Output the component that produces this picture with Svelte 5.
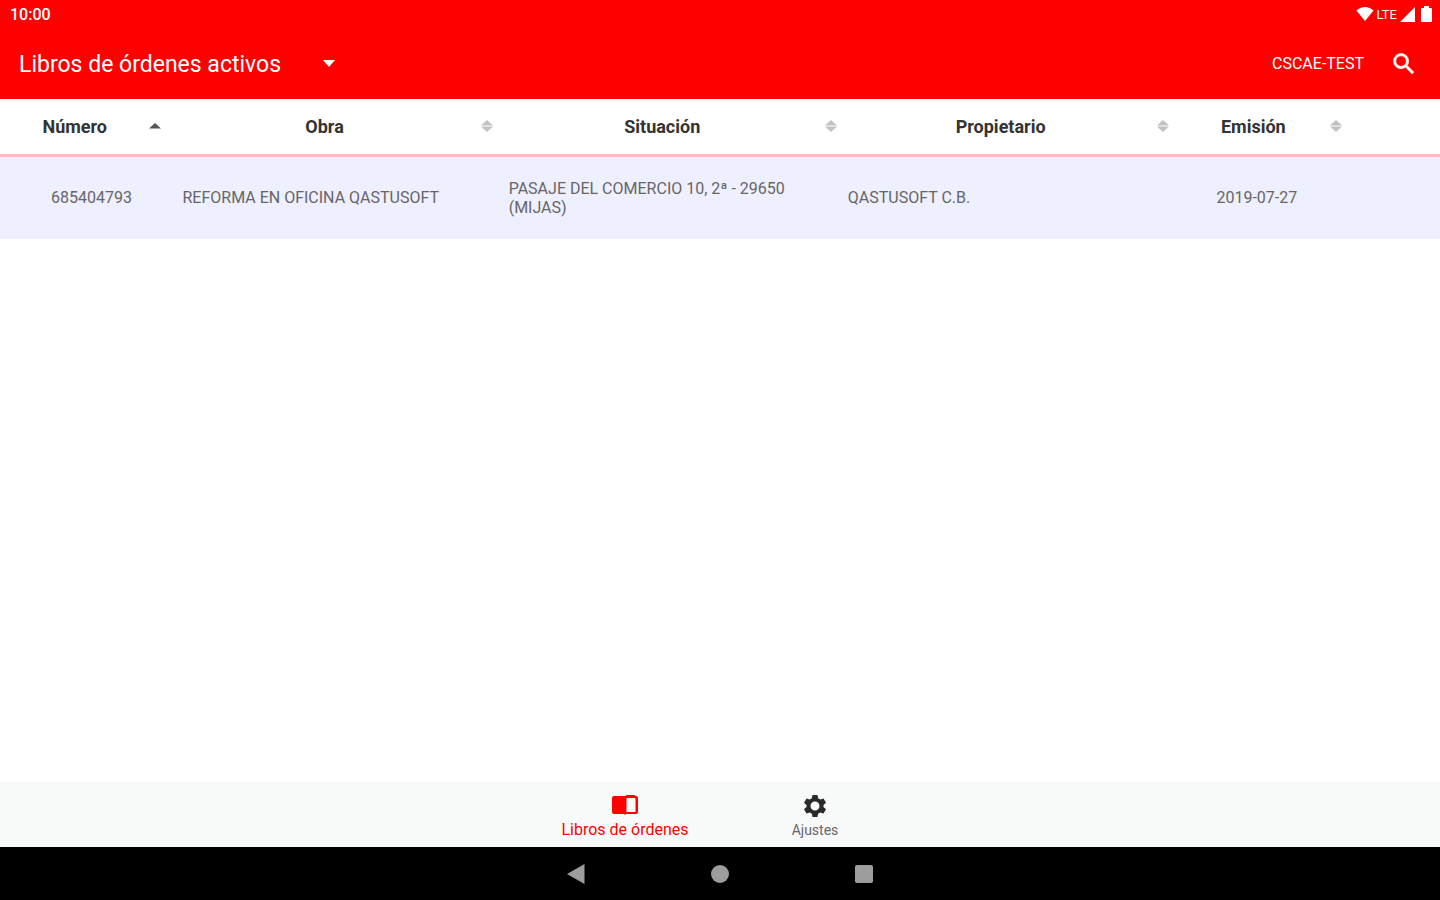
<script>
  const columns = [
    { key: 'numero', label: 'Número' },
    { key: 'obra', label: 'Obra' },
    { key: 'situacion', label: 'Situación' },
    { key: 'propietario', label: 'Propietario' },
    { key: 'emision', label: 'Emisión' }
  ];
  const rows = [
    {
      numero: '685404793',
      obra: 'REFORMA EN OFICINA QASTUSOFT',
      situacion: 'PASAJE DEL COMERCIO 10, 2ª - 29650 (MIJAS)',
      propietario: 'QASTUSOFT C.B.',
      emision: '2019-07-27'
    }
  ];
  let sortKey = $state('numero');
  let tab = $state('libros');
</script>

<div class="screen">
  <div class="status">
    <span>10:00</span>
    <div class="signals">
      <svg width="18" height="16" viewBox="0 0 18 16" aria-hidden="true"><path d="M9 15 .5 4.500C3 2.200 6 1 9 1s6 1.200 8.500 3.500z" /></svg>
      <span class="lte">LTE</span>
      <svg width="15" height="15" viewBox="0 0 15 15" aria-hidden="true"><path d="M15 0v15H0z" /></svg>
      <svg class="battery" width="11" height="16" viewBox="0 0 11 16" aria-hidden="true"><path d="M3 0h5v2h2q1 0 1 1v12q0 1-1 1H1q-1 0-1-1V3q0-1 1-1h2z" /></svg>
    </div>
  </div>

  <header class="appbar">
    <div class="picker">
      <select aria-label="Libros">
        <option>Libros de órdenes activos</option>
      </select>
      <svg width="12" height="7" viewBox="0 0 12 7" aria-hidden="true"><path d="M0 0h12L6 7z" /></svg>
    </div>
    <div class="actions">
      <button class="account">CSCAE-TEST</button>
      <button class="search" aria-label="Buscar">
        <svg width="28" height="28" viewBox="0 0 24 24" aria-hidden="true"><path stroke="currentColor" stroke-width=".5" d="M15.500 14h-.790l-.280-.270A6.471 6.471 0 0 0 16 9.500 6.500 6.500 0 1 0 9.500 16c1.610 0 3.090-.590 4.230-1.570l.270.280v.790l5 4.990L20.490 19l-4.990-5zm-6 0C7.010 14 5 11.990 5 9.500S7.010 5 9.500 5 14 7.010 14 9.500 11.990 14 9.500 14z" /></svg>
      </button>
    </div>
  </header>

  <main>
    <table>
      <thead>
        <tr>
          {#each columns as col}
            <th class={col.key} scope="col">
              <button onclick={() => (sortKey = col.key)}>
                <span>{col.label}</span>
                {#if sortKey === col.key}
                  <svg width="12" height="12" viewBox="0 0 12 12" aria-hidden="true"><path fill="#555" d="M0 8.500 6 3l6 5.500z" /></svg>
                {:else}
                  <svg width="12" height="12" viewBox="0 0 12 12" aria-hidden="true"><path fill="#c2c2c2" d="M0 5.500 6 0l6 5.500zM0 6.500h12L6 12z" /></svg>
                {/if}
              </button>
            </th>
          {/each}
          <td class="rest"></td>
        </tr>
      </thead>
      <tbody>
        {#each rows as row}
          <tr>
            {#each columns as col}
              <td class={col.key}>{row[col.key]}</td>
            {/each}
            <td></td>
          </tr>
        {/each}
      </tbody>
    </table>
  </main>

  <nav class="tabs">
    <button class:active={tab === 'libros'} onclick={() => (tab = 'libros')}>
      <svg width="26" height="20" viewBox="0 0 26 20" aria-hidden="true"><path d="M2 1h11q1.200-1 2.400-1h6.200q1.200 0 2 1H24q2 0 2 2v14q0 2-2 2H14l-1 1-1-1H2q-2 0-2-2V3q0-2 2-2zm12.500 2v14H23q.500 0 .500-.500v-13Q23.500 3 23 3z" /></svg>
      <span>Libros de órdenes</span>
    </button>
    <button class:active={tab === 'ajustes'} onclick={() => (tab = 'ajustes')}>
      <svg width="26" height="26" viewBox="0 0 26 26" aria-hidden="true"><path fill-rule="evenodd" d="M10.500 2h5l.6 3.300 2.300 1.300L21.500 5.500 24 9.800 21.500 12v2L24 16.200l-2.500 4.300-3.100-1.100-2.300 1.300-.6 3.300h-5l-.6-3.300-2.300-1.300-3.100 1.100L2 16.200 4.500 14v-2L2 9.800l2.500-4.300 3.100 1.100 2.300-1.300zM13 8.500a4.500 4.500 0 1 0 0 9 4.500 4.500 0 0 0 0-9z" /></svg>
      <span>Ajustes</span>
    </button>
  </nav>

  <div class="system">
    <button aria-label="Atrás"><svg width="20" height="20" viewBox="0 0 20 20" aria-hidden="true"><path d="M18.500 0v20L1 10z" /></svg></button>
    <button aria-label="Inicio"><svg width="20" height="20" viewBox="0 0 20 20" aria-hidden="true"><circle cx="10" cy="10" r="9" /></svg></button>
    <button aria-label="Recientes"><svg width="20" height="20" viewBox="0 0 20 20" aria-hidden="true"><rect x="1" y="1" width="18" height="18" rx="2" /></svg></button>
  </div>
</div>

<style>
  :global(body) {
    background: #fff;
  }
  .screen {
    display: flex;
    flex-direction: column;
    min-height: 100vh;
    font-family: Roboto, sans-serif;
    color: #666;
  }
  button,
  select {
    font: inherit;
    color: inherit;
    background: none;
    border: 0;
    margin: 0;
    padding: 0;
    cursor: pointer;
  }
  svg {
    display: block;
    flex: none;
    fill: currentColor;
  }
  .status {
    display: flex;
    justify-content: space-between;
    align-items: center;
    height: 28px;
    padding: 0 8px 0 10px;
    background: #f00;
    color: #fff;
    font-size: 16px;
    font-weight: 500;
  }
  .signals {
    display: flex;
    align-items: center;
    gap: 3px;
  }
  .lte {
    font-size: 13px;
    font-weight: 400;
  }
  .battery {
    margin-left: 3px;
  }
  .appbar {
    display: flex;
    justify-content: space-between;
    align-items: center;
    height: 71px;
    padding: 0 22px 0 19px;
    background: #f00;
    color: #fff;
  }
  .picker {
    display: flex;
    align-items: center;
  }
  select {
    appearance: none;
    width: 304px;
    padding-top: 2px;
    font-size: 23px;
    line-height: 32px;
  }
  .actions {
    display: flex;
    align-items: center;
    gap: 26px;
  }
  .account {
    font-size: 16px;
  }
  main {
    flex: 1;
  }
  table {
    width: 100%;
    table-layout: fixed;
    border-collapse: collapse;
  }
  thead tr {
    height: 56px;
    border-bottom: 3px solid #fbbcc0;
  }
  th {
    padding: 0;
    font-size: 18px;
    font-weight: 700;
    color: #333;
  }
  th button {
    display: flex;
    align-items: center;
    width: 100%;
    padding: 0 7px 0 0;
    height: 54px;
  }
  th span {
    flex: 1;
  }
  th.numero { width: 11.700%; }
  th.obra { width: 23%; }
  th.situacion { width: 23.900%; }
  th.propietario { width: 23.100%; }
  th.emision { width: 12%; }
  tbody tr {
    height: 84px;
    background: #eeefff;
  }
  tbody td {
    padding: 0 12px 0 4px;
    font-size: 16px;
    line-height: 19px;
  }
  tbody td.numero { padding-left: 51px; }
  tbody td.obra { padding-left: 14px; }
  tbody td.situacion { padding-left: 9px; }
  tbody td.emision { padding-left: 40px; }
  .tabs {
    display: flex;
    justify-content: center;
    height: 65px;
    background: #f8fafa;
  }
  .tabs button {
    display: flex;
    flex-direction: column;
    align-items: center;
    justify-content: flex-end;
    gap: 6px;
    width: 190px;
    padding-bottom: 8px;
    font-size: 14px;
    line-height: 18px;
  }
  .tabs button.active {
    font-size: 16px;
  }
  .tabs button:last-child {
    gap: 2px;
  }
  .tabs svg {
    color: #292929;
  }
  .tabs .active,
  .tabs .active svg {
    color: #f00;
  }
  .system {
    display: flex;
    justify-content: center;
    align-items: center;
    height: 53px;
    background: #000;
    color: #9d9d9d;
  }
  .system button {
    display: flex;
    justify-content: center;
    width: 144px;
  }
</style>
